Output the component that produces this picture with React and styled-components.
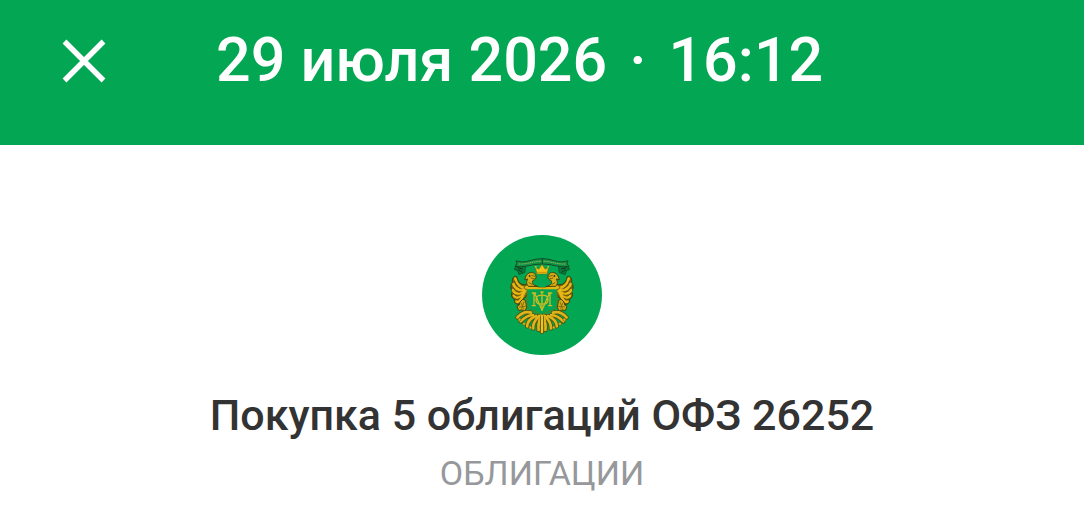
import React from 'react';
import styled, { createGlobalStyle } from 'styled-components';

const GlobalStyle = createGlobalStyle`
  *, *::before, *::after { box-sizing: border-box; }
  body {
    margin: 0;
    background: #ffffff;
    font-family: Roboto, "Noto Sans", sans-serif;
  }
`;

const Header = styled.header`
  display: flex;
  align-items: flex-start;
  gap: 104px;
  min-height: 145px;
  padding: 20px 56px;
  background: #03a653;
`;

const CloseButton = styled.button`
  display: flex;
  flex: none;
  padding: 12px 0;
  border: 0;
  background: none;
  color: #ffffff;
  cursor: pointer;
`;

const DateTitle = styled.h1`
  display: flex;
  gap: 22px;
  margin: 0;
  color: #ffffff;
  font-size: 61px;
  font-weight: 500;
  line-height: 80px;
`;

const Summary = styled.main`
  display: flex;
  flex-direction: column;
  align-items: center;
  padding: 90px 32px 20px;
  text-align: center;
`;

const Name = styled.h2`
  margin: 32px 0 0;
  color: #333333;
  font-size: 43px;
  font-weight: 500;
  line-height: 56px;
`;

const Category = styled.p`
  margin: 8px 0 0;
  color: #96989b;
  font-size: 34px;
  font-weight: 400;
  line-height: 44px;
`;

const CloseIcon = () => (
  <svg width="56" height="56" viewBox="0 0 56 56" aria-hidden="true">
    <path d="M8.5 9.5 47.5 48.5M47.5 9.5 8.5 48.5" fill="none" stroke="currentColor" strokeWidth="5.4" />
  </svg>
);

const EmblemHalf = () => (
  <g strokeLinejoin="round" strokeLinecap="round">
    <path d="M17 31 26 31 27.5 34.5 24.5 35.5 23 39.5 17.5 37.5Z" fill="#087a3d" stroke="#114d22" strokeWidth="0.9" />
    <path d="M19.5 34 24 32.8M20 37 23.5 34.8" fill="none" stroke="#15361a" strokeWidth="1" />
    <path d="M0 23.6C8 23.6 14 27 20 27L26 25.8 25 28.6 27 31.6C20 32.4 13 30.8 8 29.6L0 29Z" fill="#12914a" stroke="#124f24" strokeWidth="1" />
    <path d="M1.5 26.4C9 26.2 14 29.3 23.5 29" fill="none" stroke="#8dbb46" strokeWidth="1.1" strokeDasharray="1.2 .7" strokeLinecap="butt" />

    <path d="M12 50.5C16 51 15.5 49 18 49.6 22 49.5 24.4 46 25.4 41.4 29 41 30.4 44.5 29.4 47.6 31.6 49.5 31.6 54 29.6 56.4 31.2 59.4 30.4 63 27.6 64.2 28 67.6 26 69.6 23 69.2L20 64 16.4 62.5 14 58Z" fill="#7c670f" stroke="#394009" strokeWidth="1" />
    <g fill="none" stroke="#e8b716" strokeWidth="2.5">
      <path d="M14 52.4C21 54 25.4 49.5 26.8 43.4" />
      <path d="M15 54.5C23 56 27 54 28.6 49" />
      <path d="M16.6 56.4C22 59.7 27.6 59.1 29 55" />
      <path d="M18 58.6C22 63 26.6 63.4 28.2 60.7" />
      <path d="M19 60.5C21 65.4 23.5 68 25.6 66.5" />
    </g>
    <path d="M21 54C24 53 26 50.5 27.4 46.2M22 57.4C25 57.2 27.6 55.8 29 52.5M21.5 60C24 61.8 27 61.5 28.6 58.4M22 63C23.6 65 25.4 65.4 27 64" fill="none" stroke="#5c4c0c" strokeWidth="0.8" />

    <path d="M0 54.6H14C19 54.4 19 51 14 49.4L8 50.4 3 52.4 0 53Z" fill="#e2b61a" stroke="#4b430b" strokeWidth="0.8" />
    <path d="M4.4 51.4C9 50.4 10.6 48 9 45.4 5 44.4 5 40 8.4 38 11.4 36.6 15 38.6 16 41L17.4 44.8 14.2 44C15.6 46.4 16 48.4 14 51Z" fill="#d9ae18" stroke="#454509" strokeWidth="1" />
    <path d="M7 41.4 10.4 40.4M7.6 43.8 11 43M9.8 49.6 13 47.6" fill="none" stroke="#6b5911" strokeWidth="0.9" />
    <circle cx="12.4" cy="41" r="0.9" fill="#26340c" />

    <path d="M0 39H5L6.6 32.2 3.2 34.2 0 29.4Z" fill="#f4c016" />
    <path d="M0 39H5L6.6 32.2 3.2 34.2 0 29.4" fill="none" stroke="#6c690e" strokeWidth="0.5" />
    <path d="M0 37.4H4.4" stroke="#b58a10" strokeWidth="0.7" />
    <circle cx="6.2" cy="31.8" r="0.9" fill="#f4c016" />

    <path d="M16.6 65.5 19 64 22 67 22.8 70 25 71.4 23.4 75.6 20 74.8 17.4 76.6 15.6 73Z" fill="#d4aa13" stroke="#49430a" strokeWidth="1" />
    <path d="M18 67 20.3 73M20.8 68 18.6 74M16.8 71.4 22.7 72" fill="none" stroke="#77631a" strokeWidth="0.8" />

    <g fill="none" stroke="#4b4f0c" strokeWidth="4.2">
      <path d="M11 77.6C16 76.4 21 78.4 24.6 82.4" />
      <path d="M9 80C15 80.2 18 83 21.4 86.4" />
      <path d="M6 81C11 83 14.6 87 14.8 91.4" />
      <path d="M3 81C6 84 9.4 88.6 8.8 93.4" />
      <path d="M1 80C2.6 85 4.4 90 3.4 95" />
    </g>
    <g fill="none" stroke="#e0b31a" strokeWidth="2.7">
      <path d="M11 77.6C16 76.4 21 78.4 24.6 82.4" />
      <path d="M9 80C15 80.2 18 83 21.4 86.4" />
      <path d="M6 81C11 83 14.6 87 14.8 91.4" />
      <path d="M3 81C6 84 9.4 88.6 8.8 93.4" />
      <path d="M1 80C2.6 85 4.4 90 3.4 95" />
    </g>
    <g fill="#e0b31a" stroke="#5c570e" strokeWidth="0.5">
      <circle cx="22.6" cy="84.6" r="1.5" />
      <circle cx="18" cy="88.8" r="1.5" />
      <circle cx="11.8" cy="92.4" r="1.5" />
    </g>
    <path d="M0 54H15V69C14.6 74 10 76 4 77.5L0 80Z" fill="#02a451" />
    <path d="M15 54V69C14.6 74 10 76 4 77.5L0 80" fill="none" stroke="#62801c" strokeWidth="0.9" />
    <path d="M0 53.4H14.4" stroke="#e6b512" strokeWidth="1.8" />
    <path d="M8 58V70.6M6.3 58H9.8M6.6 70.6H9.8M1 60.4C4.4 60 6 62 6 64.8 6 68 3.8 69.6 1 69M7.6 58.4C4 64 3.4 69.3 0 74.6" fill="none" stroke="#d0bb22" strokeWidth="1.3" />
  </g>
);

const Emblem = () => (
  <svg width="120" height="120" viewBox="0 0 120 120" role="img" aria-label="Министерство финансов">
    <circle cx="60" cy="60" r="60" fill="#03a653" />
    <g transform="translate(60 0)">
      <EmblemHalf />
      <g transform="scale(-1 1)"><EmblemHalf /></g>
      <path d="M0 57V76M-1.6 57H1.6" fill="none" stroke="#d0bb1b" strokeWidth="1.4" />
      <path d="M0 82V97" fill="none" stroke="#4b4f0c" strokeWidth="4" strokeLinecap="round" />
      <path d="M0 81V97" fill="none" stroke="#efc11c" strokeWidth="2.4" strokeLinecap="round" />
    </g>
  </svg>
);

export default function App() {
  return (
    <>
      <GlobalStyle />
      <Header>
        <CloseButton type="button" aria-label="Закрыть">
          <CloseIcon />
        </CloseButton>
        <DateTitle>
          <span>29 июля 2026</span>
          <span>·</span>
          <span>16:12</span>
        </DateTitle>
      </Header>
      <Summary>
        <Emblem />
        <Name>Покупка 5 облигаций ОФЗ 26252</Name>
        <Category>ОБЛИГАЦИИ</Category>
      </Summary>
    </>
  );
}
